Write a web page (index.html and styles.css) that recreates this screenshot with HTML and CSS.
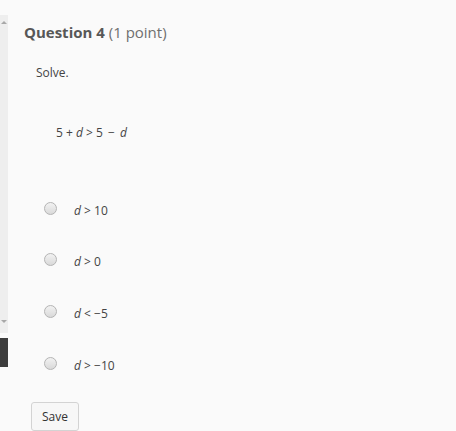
FILE: index.html
```html
<!DOCTYPE html>
<html>
<head>
<meta charset="utf-8">
<link rel="stylesheet" href="styles.css">
</head>
<body>
<div class="page">
  <div class="side">
    <div class="scroll">
      <span class="arr up"></span>
      <span class="arr down"></span>
    </div>
    <div class="dark"></div>
  </div>
  <div class="main">
    <h2 class="title"><b>Question 4</b> <span class="pts">(1 point)</span></h2>
    <p class="prompt">Solve.</p>
    <p class="eq">5 + <i>d</i> &gt; 5 <span class="minus">&minus;</span> <i>d</i></p>
    <ul class="opts">
      <li><span class="radio"></span><span><i>d</i> &gt; 10</span></li>
      <li><span class="radio"></span><span><i>d</i> &gt; 0</span></li>
      <li><span class="radio"></span><span><i>d</i> &lt; &minus;5</span></li>
      <li><span class="radio"></span><span><i>d</i> &gt; &minus;10</span></li>
    </ul>
    <button class="save">Save</button>
  </div>
</div>
</body>
</html>
```

FILE: styles.css
```css
html, body {
  margin: 0;
  padding: 0;
  background: #fafafa;
  font-family: "Open Sans", "DejaVu Sans", sans-serif;
  color: #555;
}
.page {
  display: flex;
  height: 431px;
  overflow: hidden;
}
.side {
  width: 8px;
  flex: none;
  padding-top: 15px;
  display: flex;
  flex-direction: column;
  gap: 5px;
}
.scroll {
  position: relative;
  height: 318px;
  background: #eeeeee;
}
.arr {
  position: absolute;
  left: 1px;
  width: 0;
  height: 0;
  border-left: 3px solid transparent;
  border-right: 3px solid transparent;
}
.arr.up {
  top: 6px;
  border-bottom: 3px solid #a8a8a8;
}
.arr.down {
  bottom: 10px;
  border-top: 3px solid #a8a8a8;
}
.dark {
  height: 29px;
  background: #3d3d3d;
}
.main {
  flex: 1;
  padding-left: 16px;
}
.title {
  margin: 21px 0 0;
  font-size: 15px;
  line-height: 22px;
  font-weight: normal;
  color: #575757;
}
.title b {
  font-weight: 700;
}
.pts {
  color: #6f6f6f;
}
.prompt {
  margin: 22px 0 0 12px;
  font-size: 12px;
  line-height: 16px;
  color: #444;
}
.eq {
  margin: 44px 0 0 32px;
  font-size: 12px;
  line-height: 16px;
  color: #444;
}
.minus {
  margin: 0 2px;
}
.opts {
  list-style: none;
  margin: 61px 0 0 20px;
  padding: 0;
  display: flex;
  flex-direction: column;
  gap: 35.7px;
}
.opts li {
  display: flex;
  align-items: center;
  height: 16px;
  font-size: 12px;
  color: #444;
}
.radio {
  width: 11px;
  height: 11px;
  border-radius: 50%;
  border: 1px solid #b4b4b4;
  background: linear-gradient(#f2f2f2, #d9d9d9);
  margin-right: 17px;
  position: relative;
  top: -2px;
}
.save {
  margin: 29px 0 0 7px;
  width: 48px;
  height: 29px;
  background: #f7f7f7;
  border: 1px solid #d3d3d3;
  border-radius: 3px;
  font-family: "Open Sans", sans-serif;
  font-size: 12px;
  color: #333;
  padding: 0;
}
```
